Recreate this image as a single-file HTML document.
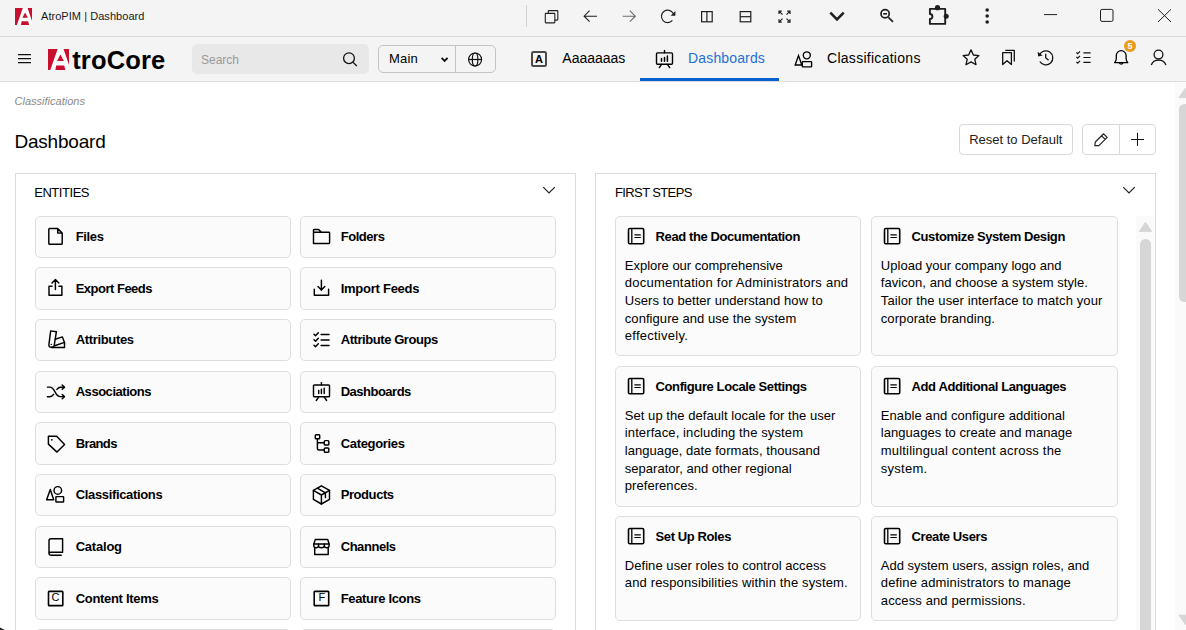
<!DOCTYPE html>
<html><head><meta charset="utf-8">
<style>
*{box-sizing:border-box;margin:0;padding:0}
html,body{width:1186px;height:630px;overflow:hidden;background:#fff;font-family:"Liberation Sans",sans-serif;color:#000;position:relative}
.abs{position:absolute}
.t{position:absolute;white-space:nowrap;line-height:1}
.card{background:#fbfbfb;border:1px solid #dedede;border-radius:5px}
#ov{position:absolute;left:0;top:0;width:1186px;height:630px;overflow:hidden;pointer-events:none}
</style></head>
<body>
<div class="abs" style="left:0;top:0;width:1186px;height:36px;background:#f4f4f4"></div>
<div class="abs" style="left:0;top:36px;width:1186px;height:1px;background:#d9d9d9"></div>
<div class="t" style="left:41.00px;top:10.69px;font-size:11px;font-weight:400;color:#1a1a1a;font-style:normal;letter-spacing:0.05px;">AtroPIM | Dashboard</div>
<div class="abs" style="left:526px;top:5px;width:1px;height:22px;background:#d0d0d0"></div>
<div class="abs" style="left:0;top:37px;width:1186px;height:44px;background:#f4f4f4"></div>
<div class="abs" style="left:0;top:81px;width:1186px;height:1px;background:#dcdcdc"></div>
<div class="t" style="left:72.20px;top:47.61px;font-size:25.5px;font-weight:700;color:#000;font-style:normal;letter-spacing:0.15px;">troCore</div>
<div class="abs" style="left:192px;top:44px;width:176.5px;height:30px;background:#e8e8e8;border-radius:5px"></div>
<div class="t" style="left:201.00px;top:53.84px;font-size:12px;font-weight:400;color:#999;font-style:normal;letter-spacing:0px;">Search</div>
<div class="abs" style="left:378px;top:45px;width:118px;height:28px;border:1px solid #c4c4c4;border-radius:5px"></div>
<div class="abs" style="left:455px;top:45px;width:1px;height:28px;background:#c4c4c4"></div>
<div class="t" style="left:389.00px;top:52.00px;font-size:13px;font-weight:400;color:#000;font-style:normal;letter-spacing:0.2px;">Main</div>
<div class="abs" style="left:531px;top:51px;width:16px;height:16px;border:2px solid #4a4a4a;border-radius:2.5px"></div>
<div class="t" style="left:535.10px;top:54.29px;font-size:11px;font-weight:700;color:#000;font-style:normal;letter-spacing:0px;">A</div>
<div class="t" style="left:562.30px;top:51.15px;font-size:14px;font-weight:400;color:#000;font-style:normal;letter-spacing:0px;">Aaaaaaas</div>
<div class="t" style="left:688.10px;top:51.15px;font-size:14px;font-weight:400;color:#1f6fd8;font-style:normal;letter-spacing:0.14px;">Dashboards</div>
<div class="abs" style="left:640px;top:78px;width:139px;height:3px;background:#0a5fd1"></div>
<div class="t" style="left:827.00px;top:51.15px;font-size:14px;font-weight:400;color:#000;font-style:normal;letter-spacing:0.28px;">Classifications</div>
<div class="abs" style="left:1123.6px;top:39.6px;width:12.8px;height:12.8px;border-radius:50%;background:#ea9a1c"></div>
<div class="t" style="left:1127.50px;top:41.98px;font-size:9px;font-weight:700;color:#fff;font-style:normal;letter-spacing:0px;">5</div>
<div class="t" style="left:14.60px;top:95.69px;font-size:11px;font-weight:400;color:#8a8a8a;font-style:italic;letter-spacing:0px;">Classifications</div>
<div class="t" style="left:14.40px;top:132.22px;font-size:19px;font-weight:400;color:#000;font-style:normal;letter-spacing:-0.2px;">Dashboard</div>
<div class="abs" style="left:959px;top:124px;width:114px;height:31px;border:1px solid #d9d9d9;border-radius:4px;background:#fff"></div>
<div class="t" style="left:969.20px;top:133.00px;font-size:13px;font-weight:400;color:#222;font-style:normal;letter-spacing:0px;">Reset to Default</div>
<div class="abs" style="left:1082px;top:124px;width:74px;height:31px;border:1px solid #d9d9d9;border-radius:4px;background:#fff"></div>
<div class="abs" style="left:1119px;top:125px;width:1px;height:29px;background:#d9d9d9"></div>
<div class="abs" style="left:15px;top:173px;width:561px;height:470px;border:1px solid #dcdcdc"></div>
<div class="abs" style="left:595px;top:173px;width:561px;height:470px;border:1px solid #dcdcdc"></div>
<div class="t" style="left:34.20px;top:186.00px;font-size:13px;font-weight:400;color:#000;font-style:normal;letter-spacing:-0.45px;">ENTITIES</div>
<div class="t" style="left:615.00px;top:186.00px;font-size:13px;font-weight:400;color:#000;font-style:normal;letter-spacing:-0.62px;">FIRST STEPS</div>
<div class="abs card" style="left:35px;top:216px;width:256px;height:42px"></div>
<div class="t" style="left:75.70px;top:230.20px;font-size:13px;font-weight:700;color:#000;font-style:normal;letter-spacing:-0.345px;">Files</div>
<div class="abs card" style="left:300px;top:216px;width:256px;height:42px"></div>
<div class="t" style="left:340.70px;top:230.20px;font-size:13px;font-weight:700;color:#000;font-style:normal;letter-spacing:-0.453px;">Folders</div>
<div class="abs card" style="left:35px;top:267px;width:256px;height:43px"></div>
<div class="t" style="left:75.70px;top:281.82px;font-size:13px;font-weight:700;color:#000;font-style:normal;letter-spacing:-0.502px;">Export Feeds</div>
<div class="abs card" style="left:300px;top:267px;width:256px;height:43px"></div>
<div class="t" style="left:340.70px;top:281.82px;font-size:13px;font-weight:700;color:#000;font-style:normal;letter-spacing:-0.256px;">Import Feeds</div>
<div class="abs card" style="left:35px;top:319px;width:256px;height:42px"></div>
<div class="t" style="left:75.70px;top:333.45px;font-size:13px;font-weight:700;color:#000;font-style:normal;letter-spacing:-0.342px;">Attributes</div>
<div class="abs card" style="left:300px;top:319px;width:256px;height:42px"></div>
<div class="t" style="left:340.70px;top:333.45px;font-size:13px;font-weight:700;color:#000;font-style:normal;letter-spacing:-0.427px;">Attribute Groups</div>
<div class="abs card" style="left:35px;top:371px;width:256px;height:42px"></div>
<div class="t" style="left:75.70px;top:385.07px;font-size:13px;font-weight:700;color:#000;font-style:normal;letter-spacing:-0.465px;">Associations</div>
<div class="abs card" style="left:300px;top:371px;width:256px;height:42px"></div>
<div class="t" style="left:340.70px;top:385.07px;font-size:13px;font-weight:700;color:#000;font-style:normal;letter-spacing:-0.498px;">Dashboards</div>
<div class="abs card" style="left:35px;top:422px;width:256px;height:43px"></div>
<div class="t" style="left:75.70px;top:436.70px;font-size:13px;font-weight:700;color:#000;font-style:normal;letter-spacing:-0.62px;">Brands</div>
<div class="abs card" style="left:300px;top:422px;width:256px;height:43px"></div>
<div class="t" style="left:340.70px;top:436.70px;font-size:13px;font-weight:700;color:#000;font-style:normal;letter-spacing:-0.331px;">Categories</div>
<div class="abs card" style="left:35px;top:474px;width:256px;height:42px"></div>
<div class="t" style="left:75.70px;top:488.32px;font-size:13px;font-weight:700;color:#000;font-style:normal;letter-spacing:-0.341px;">Classifications</div>
<div class="abs card" style="left:300px;top:474px;width:256px;height:42px"></div>
<div class="t" style="left:340.70px;top:488.32px;font-size:13px;font-weight:700;color:#000;font-style:normal;letter-spacing:-0.42px;">Products</div>
<div class="abs card" style="left:35px;top:526px;width:256px;height:42px"></div>
<div class="t" style="left:75.70px;top:539.95px;font-size:13px;font-weight:700;color:#000;font-style:normal;letter-spacing:-0.22px;">Catalog</div>
<div class="abs card" style="left:300px;top:526px;width:256px;height:42px"></div>
<div class="t" style="left:340.70px;top:539.95px;font-size:13px;font-weight:700;color:#000;font-style:normal;letter-spacing:-0.449px;">Channels</div>
<div class="abs card" style="left:35px;top:577px;width:256px;height:43px"></div>
<div class="t" style="left:75.70px;top:591.57px;font-size:13px;font-weight:700;color:#000;font-style:normal;letter-spacing:-0.312px;">Content Items</div>
<div class="t" style="left:51.40px;top:592.49px;font-size:11px;font-weight:400;color:#000;font-style:normal;letter-spacing:0px;">C</div>
<div class="abs card" style="left:300px;top:577px;width:256px;height:43px"></div>
<div class="t" style="left:340.70px;top:591.57px;font-size:13px;font-weight:700;color:#000;font-style:normal;letter-spacing:-0.353px;">Feature Icons</div>
<div class="t" style="left:318.40px;top:592.49px;font-size:11px;font-weight:400;color:#000;font-style:normal;letter-spacing:0px;">F</div>
<div class="abs card" style="left:35px;top:629px;width:256px;height:43px"></div>
<div class="abs card" style="left:300px;top:629px;width:256px;height:43px"></div>
<div class="abs card" style="left:615px;top:216px;width:246px;height:140px"></div>
<div class="t" style="left:655.60px;top:229.60px;font-size:13px;font-weight:700;color:#000;font-style:normal;letter-spacing:-0.4px;">Read the Documentation</div>
<div class="t" style="left:624.80px;top:258.60px;font-size:13px;font-weight:400;color:#000;font-style:normal;letter-spacing:-0.013px;">Explore our comprehensive</div>
<div class="t" style="left:624.80px;top:276.28px;font-size:13px;font-weight:400;color:#000;font-style:normal;letter-spacing:0.227px;">documentation for Administrators and</div>
<div class="t" style="left:624.80px;top:293.96px;font-size:13px;font-weight:400;color:#000;font-style:normal;letter-spacing:0.064px;">Users to better understand how to</div>
<div class="t" style="left:624.80px;top:311.64px;font-size:13px;font-weight:400;color:#000;font-style:normal;letter-spacing:0.059px;">configure and use the system</div>
<div class="t" style="left:624.80px;top:329.32px;font-size:13px;font-weight:400;color:#000;font-style:normal;letter-spacing:0.252px;">effectively.</div>
<div class="abs card" style="left:871px;top:216px;width:247px;height:140px"></div>
<div class="t" style="left:911.60px;top:229.60px;font-size:13px;font-weight:700;color:#000;font-style:normal;letter-spacing:-0.4px;">Customize System Design</div>
<div class="t" style="left:880.80px;top:258.60px;font-size:13px;font-weight:400;color:#000;font-style:normal;letter-spacing:0.026px;">Upload your company logo and</div>
<div class="t" style="left:880.80px;top:276.28px;font-size:13px;font-weight:400;color:#000;font-style:normal;letter-spacing:0.055px;">favicon, and choose a system style.</div>
<div class="t" style="left:880.80px;top:293.96px;font-size:13px;font-weight:400;color:#000;font-style:normal;letter-spacing:0.107px;">Tailor the user interface to match your</div>
<div class="t" style="left:880.80px;top:311.64px;font-size:13px;font-weight:400;color:#000;font-style:normal;letter-spacing:0.076px;">corporate branding.</div>
<div class="abs card" style="left:615px;top:366px;width:246px;height:141px"></div>
<div class="t" style="left:655.60px;top:379.60px;font-size:13px;font-weight:700;color:#000;font-style:normal;letter-spacing:-0.4px;">Configure Locale Settings</div>
<div class="t" style="left:624.80px;top:408.60px;font-size:13px;font-weight:400;color:#000;font-style:normal;letter-spacing:0.048px;">Set up the default locale for the user</div>
<div class="t" style="left:624.80px;top:426.28px;font-size:13px;font-weight:400;color:#000;font-style:normal;letter-spacing:0.11px;">interface, including the system</div>
<div class="t" style="left:624.80px;top:443.96px;font-size:13px;font-weight:400;color:#000;font-style:normal;letter-spacing:0.051px;">language, date formats, thousand</div>
<div class="t" style="left:624.80px;top:461.64px;font-size:13px;font-weight:400;color:#000;font-style:normal;letter-spacing:0.02px;">separator, and other regional</div>
<div class="t" style="left:624.80px;top:479.32px;font-size:13px;font-weight:400;color:#000;font-style:normal;letter-spacing:0.052px;">preferences.</div>
<div class="abs card" style="left:871px;top:366px;width:247px;height:141px"></div>
<div class="t" style="left:911.60px;top:379.60px;font-size:13px;font-weight:700;color:#000;font-style:normal;letter-spacing:-0.4px;">Add Additional Languages</div>
<div class="t" style="left:880.80px;top:408.60px;font-size:13px;font-weight:400;color:#000;font-style:normal;letter-spacing:0.067px;">Enable and configure additional</div>
<div class="t" style="left:880.80px;top:426.28px;font-size:13px;font-weight:400;color:#000;font-style:normal;letter-spacing:0.049px;">languages to create and manage</div>
<div class="t" style="left:880.80px;top:443.96px;font-size:13px;font-weight:400;color:#000;font-style:normal;letter-spacing:0.187px;">multilingual content across the</div>
<div class="t" style="left:880.80px;top:461.64px;font-size:13px;font-weight:400;color:#000;font-style:normal;letter-spacing:0.27px;">system.</div>
<div class="abs card" style="left:615px;top:516px;width:246px;height:105px"></div>
<div class="t" style="left:655.60px;top:529.60px;font-size:13px;font-weight:700;color:#000;font-style:normal;letter-spacing:-0.4px;">Set Up Roles</div>
<div class="t" style="left:624.80px;top:558.60px;font-size:13px;font-weight:400;color:#000;font-style:normal;letter-spacing:0.052px;">Define user roles to control access</div>
<div class="t" style="left:624.80px;top:576.28px;font-size:13px;font-weight:400;color:#000;font-style:normal;letter-spacing:0.141px;">and responsibilities within the system.</div>
<div class="abs card" style="left:871px;top:516px;width:247px;height:105px"></div>
<div class="t" style="left:911.60px;top:529.60px;font-size:13px;font-weight:700;color:#000;font-style:normal;letter-spacing:-0.4px;">Create Users</div>
<div class="t" style="left:880.80px;top:558.60px;font-size:13px;font-weight:400;color:#000;font-style:normal;letter-spacing:-0.015px;">Add system users, assign roles, and</div>
<div class="t" style="left:880.80px;top:576.28px;font-size:13px;font-weight:400;color:#000;font-style:normal;letter-spacing:0.143px;">define administrators to manage</div>
<div class="t" style="left:880.80px;top:593.96px;font-size:13px;font-weight:400;color:#000;font-style:normal;letter-spacing:0.111px;">access and permissions.</div>
<div class="abs" style="left:1136px;top:216px;width:18.5px;height:414px;background:#fafafa"></div>
<div class="abs" style="left:1140px;top:238.8px;width:11px;height:400px;background:#d6d6d6;border-radius:5.5px"></div>
<div class="abs" style="left:1175px;top:82px;width:11px;height:548px;background:#fafafa"></div>
<div class="abs" style="left:1179px;top:104px;width:12px;height:198px;background:#d6d6d6;border-radius:5.5px"></div>
<svg id="ov" width="1186" height="630" viewBox="0 0 1186 630">
<g transform="translate(15,8) scale(0.17)"><rect x="0" y="0" width="100" height="100" fill="#c8102e"/><path d="M46 0 L74 0 L100 76 L100 100 L83 100 L77 78 L39 78 L35 100 L11 100 Z" fill="#fff"/><path d="M59 26 L76 57 L43 57 Z" fill="#c8102e"/></g>
<g fill="none" stroke="#1f1f1f" stroke-width="1.1"><rect x="548.3" y="10.6" width="9.5" height="9.5" rx="0.6"/><rect x="545.3" y="13.4" width="9.5" height="9.5" rx="0.6" fill="#f4f4f4"/></g>
<g fill="none" stroke="#1f1f1f" stroke-width="1.1"><path d="M584 16.2 H597 M589.6 10.7 L584.1 16.2 L589.6 21.7"/></g>
<g fill="none" stroke="#6a6a6a" stroke-width="1.1"><path d="M622.7 16.2 H635.3 M629.8 10.7 L635.3 16.2 L629.8 21.7"/></g>
<g fill="none" stroke="#1f1f1f" stroke-width="1.15"><path d="M673.2 13.6 A6.2 6.2 0 1 0 672.4 20.4"/></g><path d="M675.4 10.9 L675.4 15.7 L670.6 15.7 Z" fill="#1f1f1f"/>
<g fill="none" stroke="#1f1f1f" stroke-width="1.2"><rect x="701.6" y="11.6" width="10.6" height="10.2"/><path d="M706.9 11.6 V21.8"/></g>
<g fill="none" stroke="#1f1f1f" stroke-width="1.2"><rect x="740.2" y="11.6" width="10.6" height="10.2"/><path d="M740.2 16.7 H750.8"/></g>
<g fill="none" stroke="#1f1f1f" stroke-width="1.2"><path d="M779 14 V11.2 H781.8 M779 11.2 L782.5 14.7"/><path d="M790 14 V11.2 H787.2 M790 11.2 L786.5 14.7"/><path d="M779 19.3 V22.1 H781.8 M779 22.1 L782.5 18.6"/><path d="M790 19.3 V22.1 H787.2 M790 22.1 L786.5 18.6"/></g>
<path d="M830.3 12.6 L837 19.4 L843.7 12.6" fill="none" stroke="#1f1f1f" stroke-width="2.5"/>
<g fill="none" stroke="#1f1f1f" stroke-width="1.7"><circle cx="885.1" cy="13.8" r="4.1"/><path d="M888.4 17.3 L893 21.9"/><path d="M883.2 13.8 H887" stroke-width="1.6"/></g>
<path d="M929.9 8.9 H945.2 V23.9 H929.9 V19 A2.5 2.5 0 0 0 929.9 14 Z" fill="none" stroke="#1f1f1f" stroke-width="1.9" stroke-linejoin="round"/><circle cx="937.5" cy="7.7" r="2.6" fill="#1f1f1f"/><circle cx="946.2" cy="16.3" r="2.5" fill="#1f1f1f"/>
<g fill="#1f1f1f"><circle cx="987.2" cy="10" r="1.8"/><circle cx="987.2" cy="16" r="1.8"/><circle cx="987.2" cy="22" r="1.8"/></g>
<path d="M1044 14.6 H1057" stroke="#1f1f1f" stroke-width="1"/>
<rect x="1100.5" y="9.4" width="12.5" height="12" rx="1.5" fill="none" stroke="#1f1f1f" stroke-width="1"/>
<path d="M1158 9.3 L1171 22 M1171 9.3 L1158 22" stroke="#1f1f1f" stroke-width="1"/>
<g stroke="#111" stroke-width="1.3"><path d="M18 54.6 H31 M18 58.6 H31 M18 62.6 H31"/></g>
<g transform="translate(48,49) scale(0.21)"><rect x="0" y="0" width="100" height="100" fill="#c8102e"/><path d="M46 0 L74 0 L100 76 L100 100 L83 100 L77 78 L39 78 L35 100 L11 100 Z" fill="#fff"/><path d="M59 26 L76 57 L43 57 Z" fill="#c8102e"/></g>
<g fill="none" stroke="#111" stroke-width="1.3"><circle cx="349" cy="58.2" r="5.4"/><path d="M352.9 62.1 L356.8 66"/></g>
<path d="M441.6 57.8 L444.6 60.8 L447.6 57.8" fill="none" stroke="#111" stroke-width="1.9"/>
<g fill="none" stroke="#111" stroke-width="1.2"><circle cx="475.1" cy="59.5" r="6.5"/><ellipse cx="475.1" cy="59.5" rx="2.8" ry="6.5"/><path d="M468.6 59.5 H481.6"/></g>
<g fill="none" stroke="#000" stroke-width="1.4" stroke-linecap="round"><path d="M664.5 50.4 V52.8"/><rect x="656.5" y="52.9" width="16" height="11.4" rx="1"/><path d="M661.6 64.4 L659.3 67.6 M667.4 64.4 L669.7 67.6"/><path d="M661.5 61.2 V58.6 M664.5 61.2 V57.4 M667.4 61.2 V56" stroke-width="1.5"/></g>
<g transform="translate(794.5,51) scale(1.0)" fill="none" stroke="#000" stroke-width="1.35"><path d="M0.7 14 L4 4.6 L7.3 14 Z"/><circle cx="12.3" cy="4.3" r="3.5"/><rect x="7.8" y="10.6" width="9.3" height="5.2" rx="0.6"/></g>
<path d="M971 49.9 L973.4 55 L978.9 55.6 L974.8 59.3 L976 64.7 L971 61.9 L966 64.7 L967.2 59.3 L963.1 55.6 L968.6 55 Z" fill="none" stroke="#111" stroke-width="1.3" stroke-linejoin="round"/>
<g fill="none" stroke="#111" stroke-width="1.3" stroke-linejoin="round"><path d="M1002.7 52.6 H1011.4 V64.6 L1007 60.8 L1002.7 64.6 Z"/><path d="M1005.3 50.3 H1014.3 V61.5"/></g>
<g fill="none" stroke="#111" stroke-width="1.3"><path d="M1039.3 55.2 A7 7 0 1 1 1039.8 61.5"/><path d="M1045.7 53.8 V57.8 L1048.6 60.3"/></g><path d="M1037.6 51.8 L1038.2 56.6 L1042.6 55.4 Z" fill="#111"/>
<g fill="none" stroke="#111" stroke-width="1.2"><path d="M1076.4 52.3 L1077.7 53.6 L1080 51.3 M1076.4 56.9 L1077.7 58.2 L1080 55.9 M1076.4 61.8 L1077.7 63.1 L1080 60.8"/><path d="M1083.4 52.8 H1090.6 M1083.4 57.5 H1090.6 M1083.4 62.4 H1090.6"/></g>
<g fill="none" stroke="#000" stroke-width="1.3" stroke-linejoin="round"><path d="M1114.6 62.6 Q1116.3 61 1116.3 58.6 V55.6 A4.9 4.9 0 0 1 1126.1 55.6 V58.6 Q1126.1 61 1127.8 62.6 Z"/><path d="M1119.4 62.8 A1.9 1.9 0 0 0 1123 62.8"/></g>
<g fill="none" stroke="#111" stroke-width="1.3"><circle cx="1158.5" cy="54.6" r="4.4"/><path d="M1151.3 65 A7.7 7.2 0 0 1 1165.9 65"/></g>
<g fill="none" stroke="#222" stroke-width="1.2" stroke-linejoin="round"><path d="M1094.8 145.6 L1095.3 142 L1103.6 133.8 L1107.2 137.4 L1098.9 145.6 Z M1101.6 135.8 L1105.2 139.4"/></g>
<path d="M1131.1 139.5 H1144 M1137.5 132.9 V146" stroke="#111" stroke-width="1"/>
<path d="M543.2 187.2 L549 193 L554.8 187.2" fill="none" stroke="#222" stroke-width="1.2"/>
<path d="M1123.2 187.2 L1129 193 L1134.8 187.2" fill="none" stroke="#222" stroke-width="1.2"/>
<g transform="translate(44,225)" fill="none" stroke="#000" stroke-width="1.45" stroke-linejoin="round" stroke-linecap="round"><path d="M13.7 3.6 V8.1 H18.2 Z" fill="#bbb" stroke="none"/><path d="M4.8 18.4 V4.3 Q4.8 3.5 5.6 3.5 H13.7 L18.2 8 V18.4 Q18.2 19.2 17.4 19.2 H5.6 Q4.8 19.2 4.8 18.4 Z M13.7 3.5 V8.1 H18.2"/></g>
<g transform="translate(309,225)" fill="none" stroke="#000" stroke-width="1.45" stroke-linejoin="round" stroke-linecap="round"><path d="M4.5 18.4 V5.2 Q4.5 4.5 5.2 4.5 H9.6 L12.4 7.3 H19.9 Q20.6 7.3 20.6 8 V17.7 Q20.6 18.4 19.9 18.4 Z M4.5 7.3 H12.4"/></g>
<g transform="translate(44,276)" fill="none" stroke="#000" stroke-width="1.45" stroke-linejoin="round" stroke-linecap="round"><path d="M8 10.3 H5 V19.3 H17.9 V10.3 H15"/><path d="M11.4 13.5 V3.6 M8 7.1 L11.4 3.6 L14.8 7.1"/></g>
<g transform="translate(309,276)" fill="none" stroke="#000" stroke-width="1.45" stroke-linejoin="round" stroke-linecap="round"><path d="M5.3 13.3 V19.2 H19.6 V13.3"/><path d="M12.4 4.2 V14.2 M9 10.6 L12.4 14 L15.8 10.6"/></g>
<g transform="translate(44,328)" fill="none" stroke="#000" stroke-width="1.45" stroke-linejoin="round" stroke-linecap="round"><path d="M6.7 2.9 L12.4 3.7 L10.2 17.4 Q9.8 19.5 7.3 19.3 Q4.6 19 4.9 16.6 Z"/><circle cx="7.3" cy="16.4" r="0.7" fill="#000" stroke="none"/><path d="M11.3 11.3 L18.4 8.9 L20.5 14.4 L10.6 17.8"/><path d="M20.5 14.4 V19.4 H7.6"/></g>
<g transform="translate(309,328)" fill="none" stroke="#000" stroke-width="1.45" stroke-linejoin="round" stroke-linecap="round"><path d="M5 6.3 L6.5 7.8 L9.3 4.8 M5 11.8 L6.5 13.3 L9.3 10.3 M5 17.3 L6.5 18.8 L9.3 15.8"/><path d="M12.1 6.5 H20.1 M12.1 12 H20.1 M12.1 17.5 H20.1"/></g>
<g transform="translate(44,380)" fill="none" stroke="#000" stroke-width="1.45" stroke-linejoin="round" stroke-linecap="round"><path d="M3.4 7.1 H5.6 Q8.6 7.1 11 11.8 Q13.4 16.6 16.6 16.6 H20.3 M3.4 16.8 H5.6 Q8 16.8 9.6 14.4 M12.9 9.4 Q14.6 7.2 16.6 7.2 H20.3"/><path d="M18.2 5.1 L20.5 7.2 L18.2 9.3 M18.2 14.5 L20.5 16.6 L18.2 18.7"/></g>
<g transform="translate(309,380)" fill="none" stroke="#000" stroke-width="1.45" stroke-linejoin="round" stroke-linecap="round"><path d="M12.4 2.6 V4.9"/><rect x="4.5" y="4.9" width="16" height="11.9" rx="0.9"/><path d="M9.7 16.9 L7.3 20.5 M15.2 16.9 L17.6 20.5"/><path d="M9.7 10.4 V13.4 M12.4 9.2 V13.4 M15.2 8.3 V13.4"/></g>
<g transform="translate(44,431)" fill="none" stroke="#000" stroke-width="1.45" stroke-linejoin="round" stroke-linecap="round"><path d="M4.4 5.3 H12.6 L20.6 13.5 L13 21.1 L4.4 13.1 Z"/><rect x="7.1" y="8.1" width="1.5" height="1.5" fill="#000" stroke="none"/></g>
<g transform="translate(309,431)" fill="none" stroke="#000" stroke-width="1.45" stroke-linejoin="round" stroke-linecap="round"><rect x="6.3" y="3.7" width="4.4" height="4" rx="0.8"/><rect x="15.3" y="9.6" width="4.5" height="4.4" rx="0.8"/><rect x="15.3" y="16.9" width="4.5" height="4.3" rx="0.8"/><path d="M8.4 7.7 V17.4 Q8.4 18.9 9.9 18.9 H15.3 M8.4 11.7 H15.3"/></g>
<g transform="translate(44,483)" fill="none" stroke="#000" stroke-width="1.45" stroke-linejoin="round" stroke-linecap="round"><path d="M2.6 16.7 L6.3 6.4 L9.7 16.7 Z"/><circle cx="13.8" cy="7.4" r="3.8"/><rect x="11.9" y="13.6" width="7.7" height="5.3" rx="0.5"/></g>
<g transform="translate(309,483)" fill="none" stroke="#000" stroke-width="1.45" stroke-linejoin="round" stroke-linecap="round"><path d="M12.4 2.8 L20.5 7.4 V16.4 L12.4 21 L4.4 16.4 V7.4 Z"/><path d="M4.4 7.4 L12.4 12 L20.5 7.4 M12.4 12 V21"/><path d="M8.8 5.3 L16.4 9.8 V14.4"/></g>
<g transform="translate(44,535)" fill="none" stroke="#000" stroke-width="1.45" stroke-linejoin="round" stroke-linecap="round"><path d="M5 19 V5.8 Q5 3.7 7.1 3.7 H18.6 V17.3 H7 Q5 17.3 5 18.8 Q5 20.2 6.8 20.2 H17.2"/></g>
<g transform="translate(309,535)" fill="none" stroke="#000" stroke-width="1.45" stroke-linejoin="round" stroke-linecap="round"><path d="M5.7 12.6 V19.4 H19.2 V12.6"/><path d="M6.3 4.4 H18.7 L20.1 9 H4.8 Z"/><path d="M4.8 9 V10.4 Q4.8 12.7 7.1 12.7 Q9.5 12.7 9.5 10.4 V9 M9.5 10.4 Q9.5 12.7 12.4 12.7 Q15.3 12.7 15.3 10.4 V9 M15.3 10.4 Q15.3 12.7 17.7 12.7 Q20.1 12.7 20.1 10.4 V9"/></g>
<g transform="translate(44,586)" fill="none" stroke="#000" stroke-width="1.45" stroke-linejoin="round" stroke-linecap="round"><rect x="4.5" y="5.4" width="14.3" height="14.2" rx="0.7" stroke-width="1.6"/></g>
<g transform="translate(309,586)" fill="none" stroke="#000" stroke-width="1.45" stroke-linejoin="round" stroke-linecap="round"><rect x="5.2" y="5.4" width="14.5" height="14.2" rx="0.7" stroke-width="1.6"/></g>
<g transform="translate(624,225)" fill="none" stroke="#000" stroke-width="1.6"><rect x="4.5" y="3.5" width="15.2" height="15.3" rx="1.3"/><path d="M7.8 3.5 V18.8" stroke-width="1.3"/><path d="M10.4 9.9 H16.8 M10.4 12.5 H16.8" stroke-width="1.2"/></g>
<g transform="translate(880,225)" fill="none" stroke="#000" stroke-width="1.6"><rect x="4.5" y="3.5" width="15.2" height="15.3" rx="1.3"/><path d="M7.8 3.5 V18.8" stroke-width="1.3"/><path d="M10.4 9.9 H16.8 M10.4 12.5 H16.8" stroke-width="1.2"/></g>
<g transform="translate(624,375)" fill="none" stroke="#000" stroke-width="1.6"><rect x="4.5" y="3.5" width="15.2" height="15.3" rx="1.3"/><path d="M7.8 3.5 V18.8" stroke-width="1.3"/><path d="M10.4 9.9 H16.8 M10.4 12.5 H16.8" stroke-width="1.2"/></g>
<g transform="translate(880,375)" fill="none" stroke="#000" stroke-width="1.6"><rect x="4.5" y="3.5" width="15.2" height="15.3" rx="1.3"/><path d="M7.8 3.5 V18.8" stroke-width="1.3"/><path d="M10.4 9.9 H16.8 M10.4 12.5 H16.8" stroke-width="1.2"/></g>
<g transform="translate(624,525)" fill="none" stroke="#000" stroke-width="1.6"><rect x="4.5" y="3.5" width="15.2" height="15.3" rx="1.3"/><path d="M7.8 3.5 V18.8" stroke-width="1.3"/><path d="M10.4 9.9 H16.8 M10.4 12.5 H16.8" stroke-width="1.2"/></g>
<g transform="translate(880,525)" fill="none" stroke="#000" stroke-width="1.6"><rect x="4.5" y="3.5" width="15.2" height="15.3" rx="1.3"/><path d="M7.8 3.5 V18.8" stroke-width="1.3"/><path d="M10.4 9.9 H16.8 M10.4 12.5 H16.8" stroke-width="1.2"/></g>
<path d="M1145.5 222.3 L1151.6 231.4 H1139.4 Z" fill="#d6d6d6" stroke="#d6d6d6" stroke-width="1" stroke-linejoin="round"/>
<path d="M1185.5 88.2 L1192 97.6 H1179 Z" fill="#d6d6d6" stroke="#d6d6d6" stroke-width="1" stroke-linejoin="round"/>
<path d="M1185.5 624.5 L1192 615.2 H1179 Z" fill="#d6d6d6" stroke="#d6d6d6" stroke-width="1" stroke-linejoin="round"/>
<path d="M0 627.6 L4.8 630 H0 Z" fill="#222"/>
</svg>
</body></html>
